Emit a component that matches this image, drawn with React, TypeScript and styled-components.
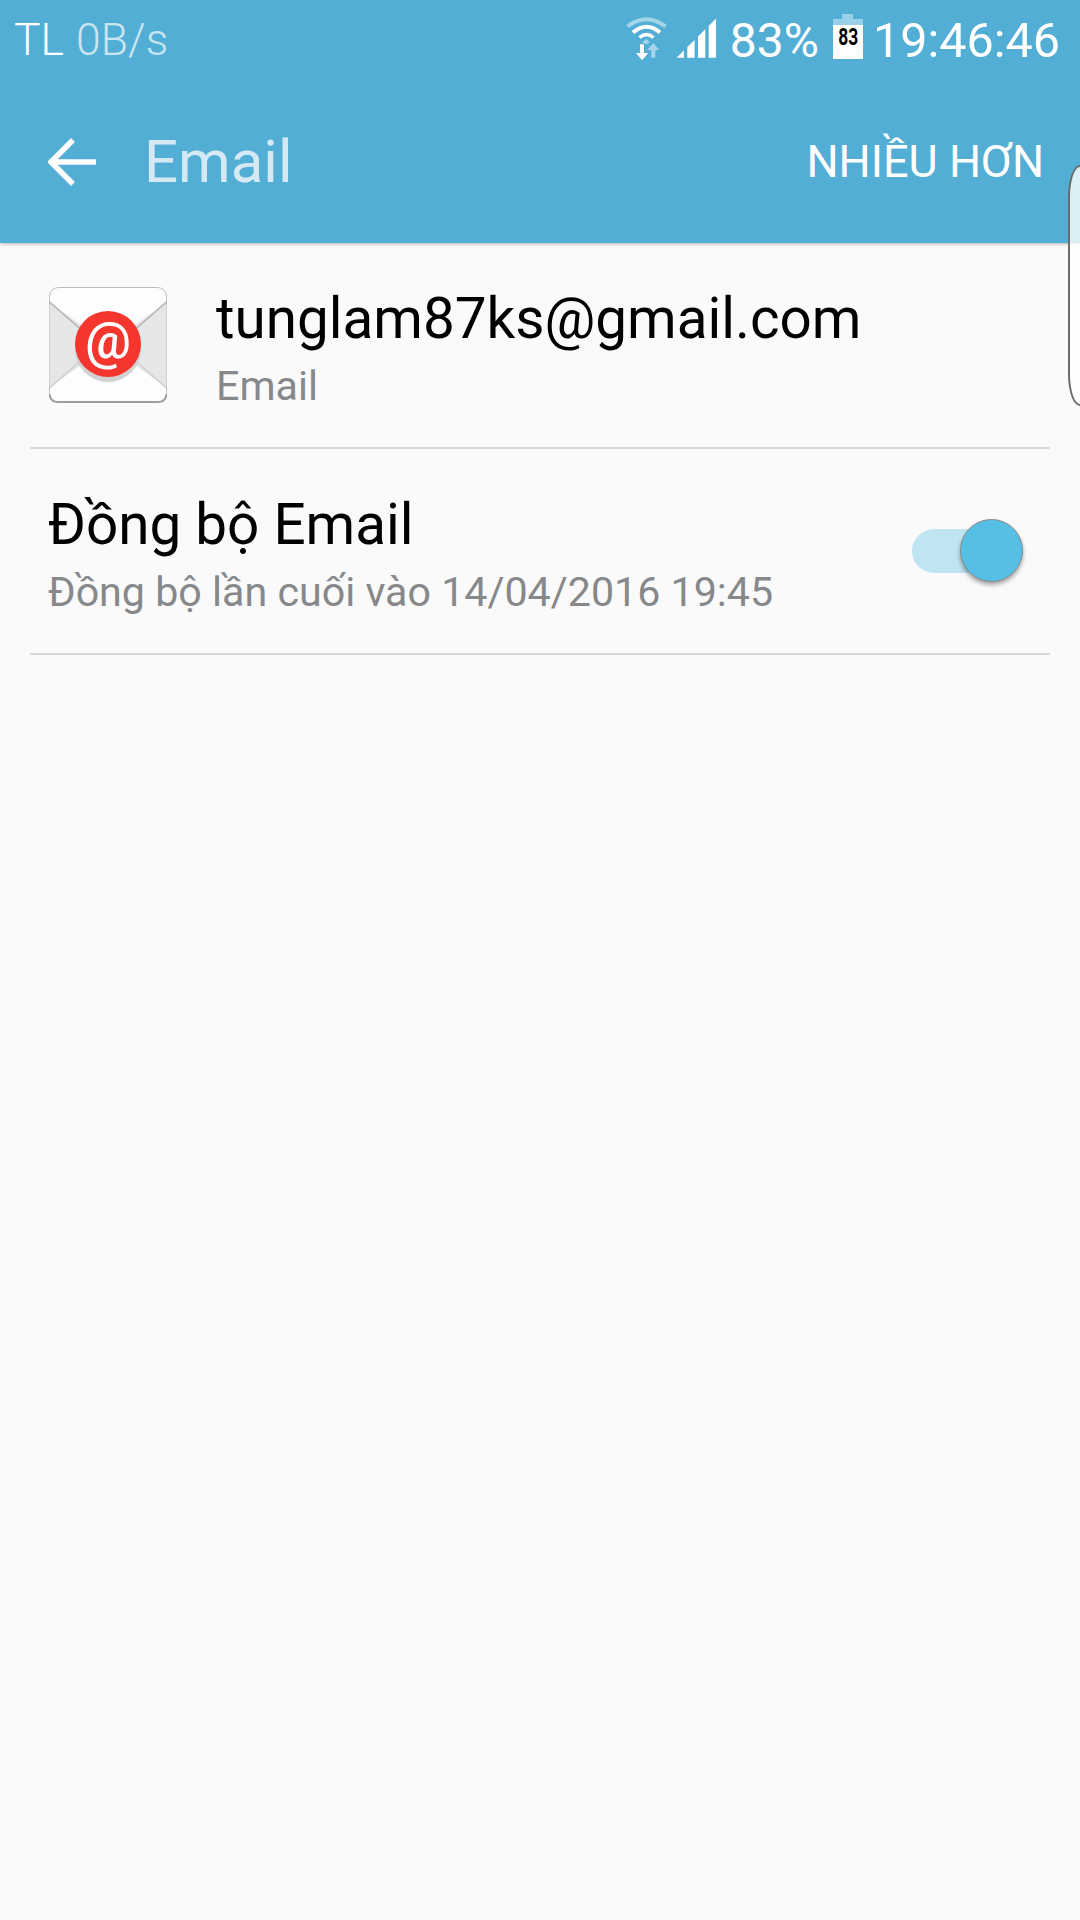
import React from "react";
import styled, { createGlobalStyle } from "styled-components";

const Global = createGlobalStyle`
  html, body { margin: 0; padding: 0; background: #fafafa; }
  * { box-sizing: border-box; }
  body { font-family: Roboto, "Noto Sans", sans-serif; }
`;

const Screen = styled.div`
  position: relative;
  width: 1080px;
  height: 1920px;
  overflow: hidden;
  background: #fafafa;
`;

const Header = styled.header`
  height: 243px;
  background: #52aed4;
  box-shadow: 0 1px 3px rgba(0, 0, 0, 0.28);
  position: relative;
`;

const StatusBar = styled.div`
  height: 80px;
  padding: 0 20px 0 14px;
  display: flex;
  align-items: center;
  justify-content: space-between;
  color: #fff;
`;

const StatusLeft = styled.div`
  display: flex;
  gap: 12px;
  font-size: 44.5px;
  font-weight: 300;
`;

const Speed = styled.span`
  color: #c9e5f1;
`;

const StatusRight = styled.div`
  display: flex;
  align-items: center;
`;

const WifiIcon = styled.svg`
  width: 41px;
  height: 44px;
  margin-right: 9px;
  margin-top: -3px;
`;

const SignalIcon = styled.svg`
  width: 41px;
  height: 41px;
  margin-right: 13px;
  margin-top: -3px;
`;

const Percent = styled.span`
  font-size: 48px;
  margin-right: 14px;
`;

const Battery = styled.div`
  position: relative;
  width: 30px;
  height: 40px;
  margin-top: -2px;
  margin-right: 10px;
  background: #fff;
  color: #000;
  font-size: 23px;
  font-weight: 700;
  display: flex;
  align-items: center;
  justify-content: center;
  border-top: 6px solid #9ad0e7;

  &::before {
    content: "";
    position: absolute;
    top: -11px;
    left: 9px;
    width: 11px;
    height: 5px;
    background: #9ad0e7;
  }
`;

const BatteryLevel = styled.span`
  display: block;
  transform: scaleX(0.76);
  margin-top: -10px;
`;

const Clock = styled.span`
  font-size: 48.5px;
`;

const Toolbar = styled.div`
  height: 163px;
  display: flex;
  align-items: center;
  padding: 0 36px 0 48px;
`;

const BackIcon = styled.svg`
  width: 50px;
  height: 50px;
  margin-right: 46px;
`;

const Title = styled.h1`
  margin: 0;
  flex: 1;
  font-size: 60px;
  font-weight: 400;
  color: #d4e9f3;
`;

const Action = styled.span`
  font-size: 45px;
  font-weight: 400;
  color: #fff;
`;

const Row = styled.div`
  height: 206px;
  margin: 0 30px;
  padding: 0 27px 0 18px;
  display: flex;
  align-items: center;
  border-bottom: 2px solid #d8d8d8;
`;

const AppIcon = styled.svg`
  width: 118px;
  height: 116px;
  margin: 0 49px 0 1px;
  flex: none;
`;

const RowText = styled.div`
  flex: 1;
  display: flex;
  flex-direction: column;
  gap: 9px;
  padding-top: 6px;
`;

const Primary = styled.div`
  font-size: 56.6px;
  line-height: 66px;
  color: #000;
`;

const Secondary = styled.div`
  font-size: 41.2px;
  line-height: 50px;
  color: #86888a;
`;

const Switch = styled.div`
  position: relative;
  width: 111px;
  height: 44px;
  border-radius: 22px;
  background: #bfe5f3;
`;

const Thumb = styled.div`
  position: absolute;
  right: 0;
  top: -10px;
  width: 63px;
  height: 63px;
  border-radius: 50%;
  background: #55bfe5;
  border: 1px solid #8a8a8a;
  box-shadow: 0 3px 4px rgba(0, 0, 0, 0.35);
`;

const EdgeHandle = styled.div`
  position: absolute;
  right: -30px;
  top: 165px;
  width: 42px;
  height: 241px;
  border: 2px solid #6b6b6b;
  border-radius: 12px 0 0 12px / 32px 0 0 32px;
  background: rgba(255, 255, 255, 0.8);
`;

export default function App() {
  return (
    <Screen>
      <Global />
      <Header>
        <StatusBar>
          <StatusLeft>
            <span>TL</span>
            <Speed>0B/s</Speed>
          </StatusLeft>
          <StatusRight>
            <WifiIcon viewBox="0 0 41 44">
              <path d="M1.500 9.500 Q20.500 -5 39.500 9.500" fill="none" stroke="#a5d5e9" strokeWidth="4" />
              <path d="M7 15.500 Q20.500 4 34 15.500" fill="none" stroke="#fff" strokeWidth="4" />
              <path d="M13.500 20.500 Q20.500 14.500 27.500 20.500" fill="none" stroke="#fff" strokeWidth="3.500" />
              <path d="M16.300 25 L20.200 22 L24 25 L20.200 27.500 Z" fill="#a5d5e9" />
              <path d="M25.300 40.700 V33 H21.300 L27.300 26 L33.300 33 H29.300 V40.700 Z" fill="#a5d5e9" />
              <path d="M14 27.300 H18 V36 H22.300 L16.100 43.300 L10 36 H14 Z" fill="#fff" />
            </WifiIcon>
            <SignalIcon viewBox="0 0 41 41">
              <path d="M0.600 39.700 L7.900 32.500 V39.700 Z M11.300 29 L18.600 22 V39.700 H11.300 Z M22 18.600 L29.300 11.300 V39.700 H22 Z M32.700 8 L40 0.600 V39.700 H32.700 Z" fill="#fff" />
            </SignalIcon>
            <Percent>83%</Percent>
            <Battery>
              <BatteryLevel>83</BatteryLevel>
            </Battery>
            <Clock>19:46:46</Clock>
          </StatusRight>
        </StatusBar>
        <Toolbar>
          <BackIcon viewBox="0 0 50 50">
            <path d="M48 25 H4 M25 3 L3 25 L25 47" fill="none" stroke="#fff" strokeWidth="5.500" />
          </BackIcon>
          <Title>Email</Title>
          <Action>NHIỀU HƠN</Action>
        </Toolbar>
      </Header>
      <Row>
        <AppIcon viewBox="0 0 118 116">
          <rect x="0.500" y="0.500" width="117" height="114.500" rx="9" fill="#fdfdfd" stroke="#bdbdbd" strokeWidth="1" />
          <path d="M0.500 15 L59 58 L0.500 101 Z" fill="#e6e6e6" />
          <path d="M117.500 15 L59 58 L117.500 101 Z" fill="#e6e6e6" />
          <path d="M0.500 15 L59 66 M117.500 15 L59 66" stroke="#b2b2b2" strokeWidth="1.500" fill="none" />
          <path d="M0.500 101 L59 50 M117.500 101 L59 50" stroke="#cdcdcd" strokeWidth="1.500" fill="none" />
          <path d="M0.500 107 Q1 115 9 115 H109 Q117 115 117.500 107" fill="none" stroke="#9c9c9c" strokeWidth="1.800" />
          <circle cx="59" cy="62" r="33" fill="#d2d2d2" />
          <circle cx="59" cy="57" r="33" fill="#f5362f" />
          <text x="59" y="71" textAnchor="middle" fontFamily="Roboto, sans-serif" fontSize="51" fontWeight="500" fill="#fff">@</text>
        </AppIcon>
        <RowText>
          <Primary>tunglam87ks@gmail.com</Primary>
          <Secondary>Email</Secondary>
        </RowText>
      </Row>
      <Row>
        <RowText>
          <Primary>Đồng bộ Email</Primary>
          <Secondary>Đồng bộ lần cuối vào 14/04/2016 19:45</Secondary>
        </RowText>
        <Switch>
          <Thumb />
        </Switch>
      </Row>
      <EdgeHandle />
    </Screen>
  );
}
